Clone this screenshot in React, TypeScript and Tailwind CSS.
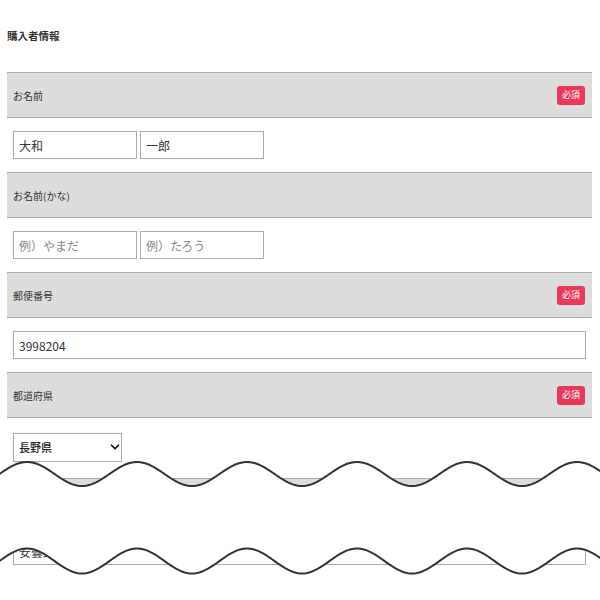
import React from 'react';
import { ChevronDown } from 'lucide-react';

// sine wave used for the "torn" cut-out between the two lines
const wavePoints = (cy: number, amp: number) => {
  const pts: string[] = [];
  for (let x = -6; x <= 606; x += 2) {
    const y = cy - amp * Math.cos((2 * Math.PI * (x - 27)) / 110);
    pts.push(`${x},${y.toFixed(2)}`);
  }
  return pts;
};

const SectionHeader = ({ label, required }: { label: string; required?: boolean }) => (
  <div className="h-[46px] border-y border-[#aaaaaa] bg-[#dddddd] flex items-center justify-between pl-[6px] pr-[7px]">
    <span className="text-[10px] text-[#333]">{label}</span>
    {required && (
      <span className="w-[28px] h-[19px] rounded-[3px] bg-[#e8385b] text-white text-[9px] flex items-center justify-center">
        必須
      </span>
    )}
  </div>
);

const inputCls =
  'h-[28px] border border-[#aaaaaa] bg-white px-[5px] text-[12px] text-[#333] placeholder:text-[#888] outline-none';

export default function App() {
  const top = wavePoints(474, 12);
  const bottom = wavePoints(561, 12.5);
  const fill = `M${top.join(' L')} L${[...bottom].reverse().join(' L')} Z`;

  return (
    <div className="relative w-[600px] h-[600px] overflow-hidden bg-white text-[#333] font-['Noto_Sans_CJK_JP',sans-serif]">
      <div className="pl-[7px] pr-[8px]">
        <h2 className="h-[72px] pt-[28px] text-[10.5px] leading-[15px] font-bold">購入者情報</h2>

        <SectionHeader label="お名前" required />
        <div className="py-[13px] pl-[6px] flex gap-[3px]">
          <input className={`${inputCls} w-[124px]`} defaultValue="大和" />
          <input className={`${inputCls} w-[124px]`} defaultValue="一郎" />
        </div>

        <SectionHeader label="お名前(かな)" />
        <div className="py-[13px] pl-[6px] flex gap-[3px]">
          <input className={`${inputCls} w-[124px]`} placeholder="例）やまだ" />
          <input className={`${inputCls} w-[124px]`} placeholder="例）たろう" />
        </div>

        <SectionHeader label="郵便番号" required />
        <div className="py-[13px] pl-[6px] pr-[6px]">
          <input className={`${inputCls} w-full`} defaultValue="3998204" />
        </div>

        <SectionHeader label="都道府県" required />
        <div className="pt-[15px] pb-[16px] pl-[6px]">
          <div className="relative w-[109px]">
            <select
              className="h-[29px] w-[109px] appearance-none border border-[#aaaaaa] bg-white pl-[5px] text-[11px] font-medium text-[#222] outline-none"
              defaultValue="長野県"
            >
              <option>長野県</option>
            </select>
            <ChevronDown
              size={14}
              strokeWidth={3}
              className="absolute right-0 top-[7px] text-[#111] pointer-events-none"
            />
          </div>
        </div>

        <SectionHeader label="市区町村" required />
        <div className="py-[13px] pl-[6px] pr-[6px]">
          <input className={`${inputCls} w-full`} defaultValue="安曇野市豊科" />
        </div>
      </div>

      {/* wavy cut hiding the middle of the form */}
      <svg className="absolute inset-0 pointer-events-none" width="600" height="600" viewBox="0 0 600 600">
        <path d={fill} fill="#fff" />
        <polyline points={top.join(' ')} fill="none" stroke="#333" strokeWidth="2" />
        <polyline points={bottom.join(' ')} fill="none" stroke="#333" strokeWidth="2" />
      </svg>
    </div>
  );
}
